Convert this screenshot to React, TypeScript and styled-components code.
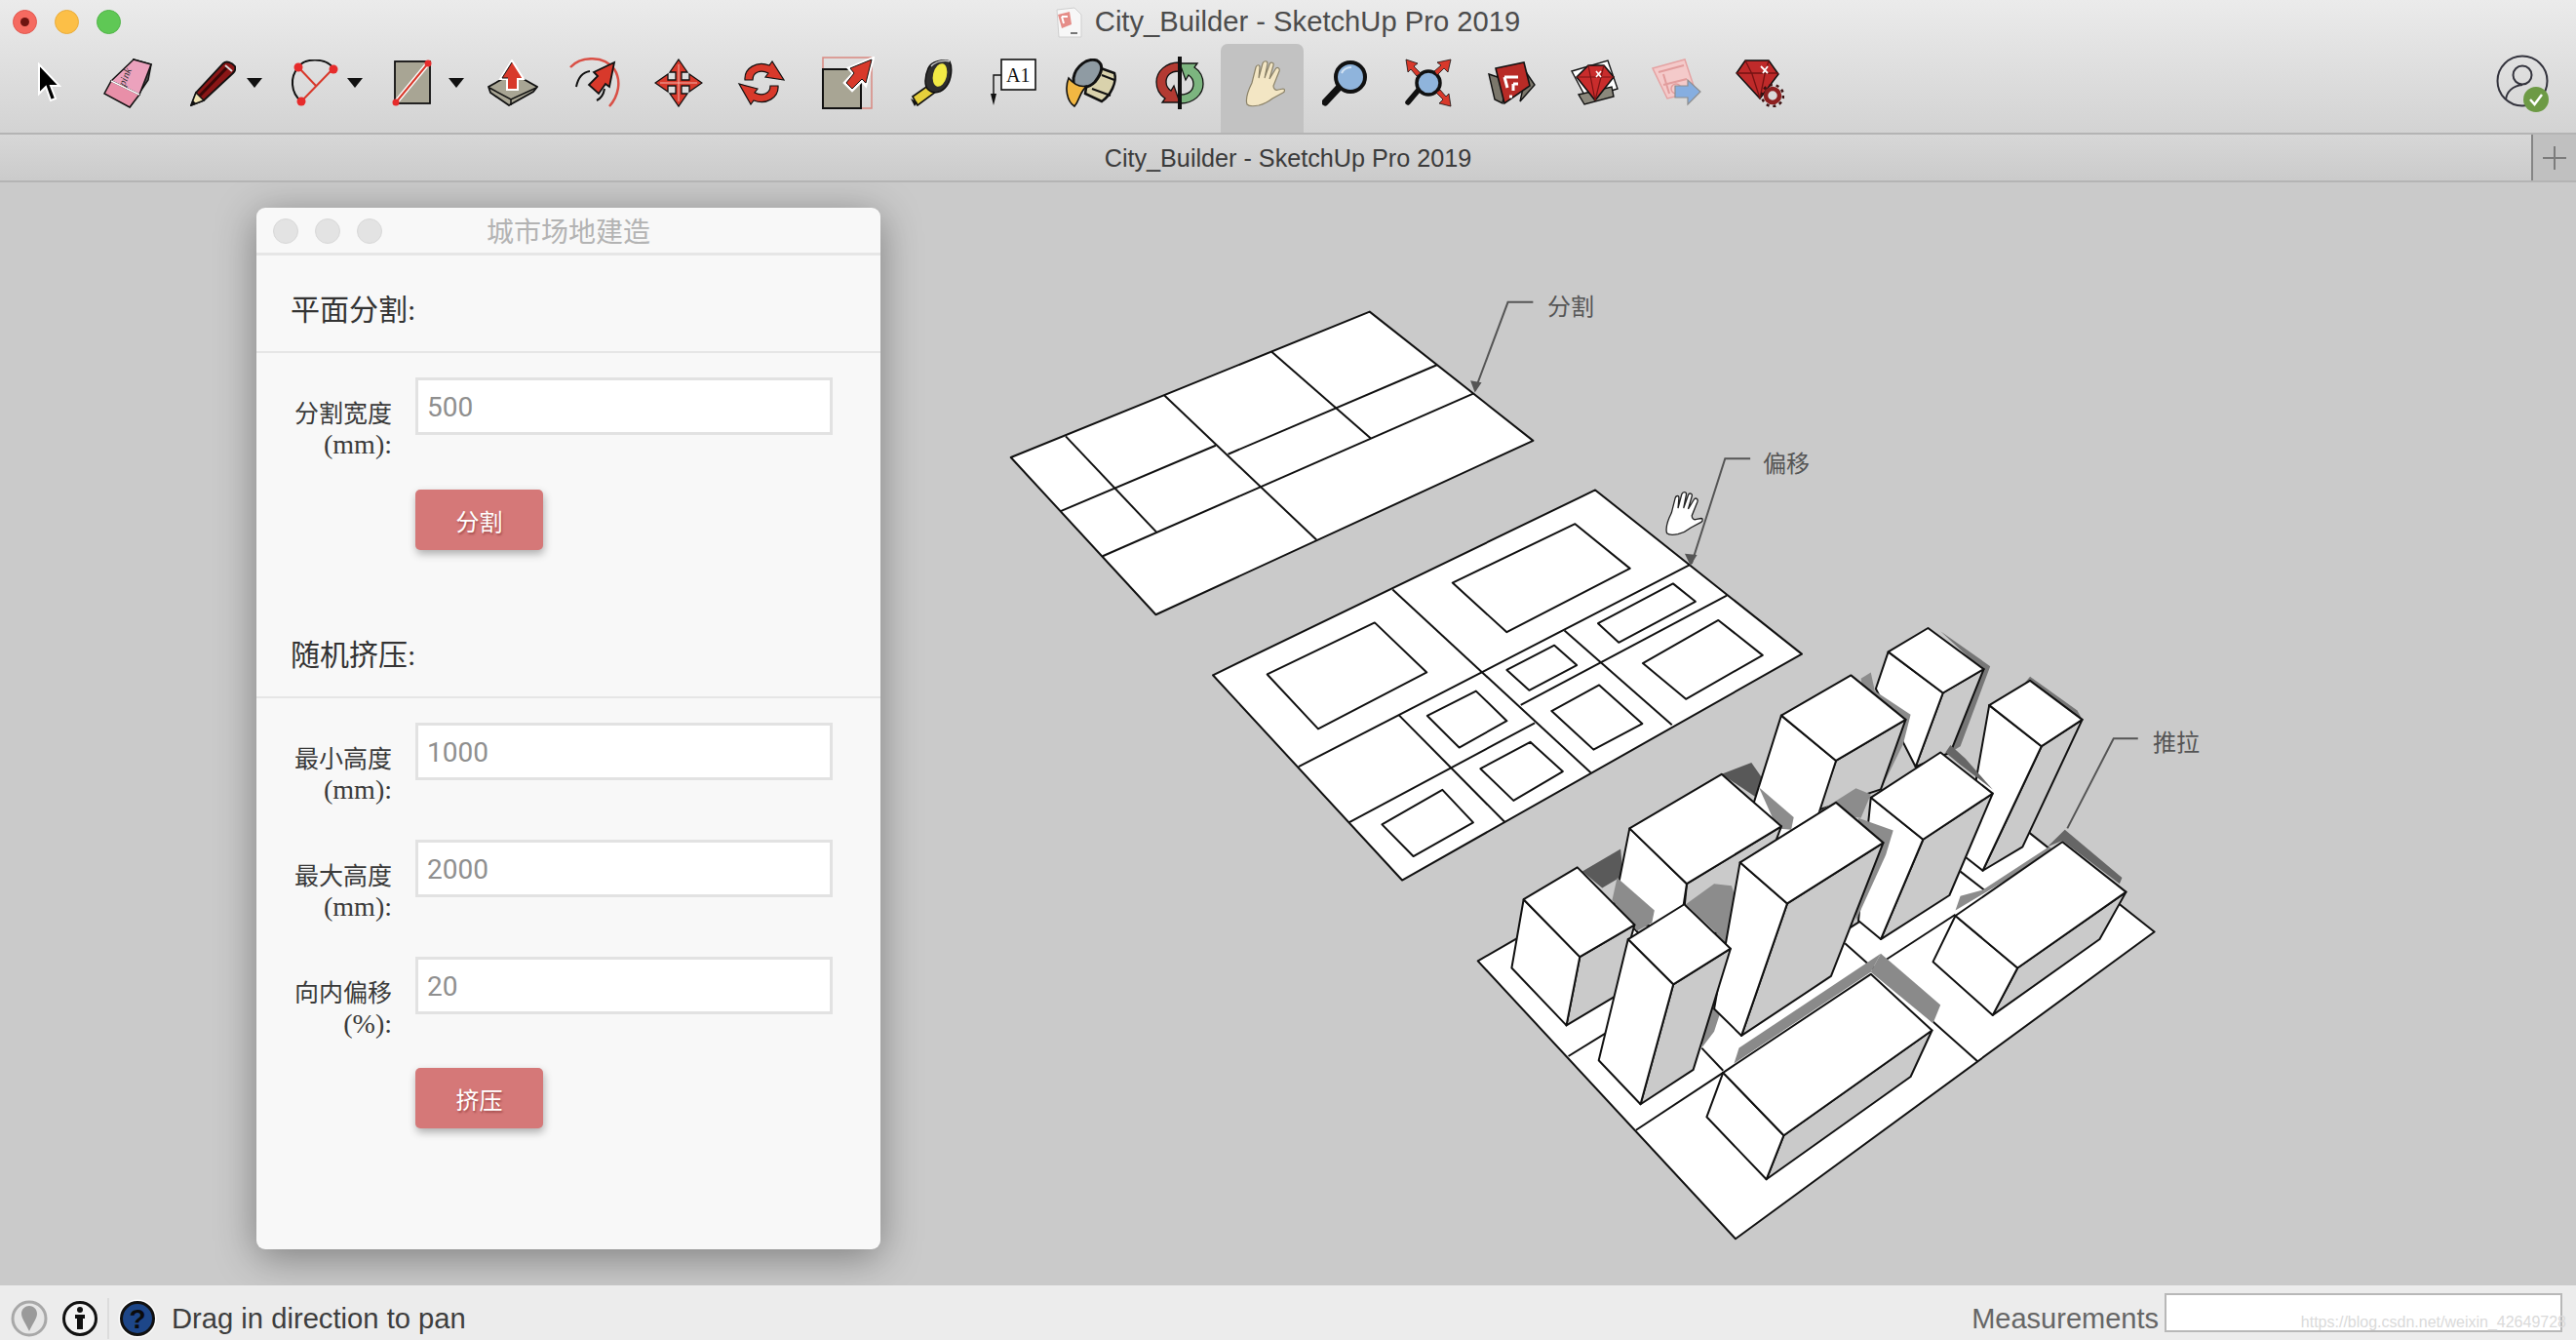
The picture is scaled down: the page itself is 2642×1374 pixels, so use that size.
import React from "react";
import styled, { createGlobalStyle } from "styled-components";

const GlobalStyle = createGlobalStyle`
  html, body {
    margin: 0;
    width: 2642px;
    height: 1374px;
    overflow: hidden;
    background: #cacaca;
  }
  * { box-sizing: border-box; }
`;

const UI_FONT = `"Liberation Sans", "Noto Sans CJK SC", sans-serif`;
const SERIF_FONT = `"Liberation Serif", "Noto Sans CJK SC", serif`;

const Page = styled.div`
  width: 2642px;
  height: 1374px;
  display: flex;
  flex-direction: column;
  font-family: ${UI_FONT};
`;

const TopChrome = styled.div`
  height: 136px;
  flex: none;
  background: linear-gradient(#ebebeb, #d3d3d3);
`;

const TitleRow = styled.div`
  height: 45px;
  display: grid;
  grid-template-columns: 1fr auto 1fr;
  align-items: center;
`;

const Lights = styled.div`
  display: flex;
  gap: 18px;
  margin-left: 13px;
`;

const Light = styled.div<{ $c: string; $b: string }>`
  width: 25px;
  height: 25px;
  border-radius: 50%;
  background: ${(p) => p.$c};
  border: 1px solid ${(p) => p.$b};
  display: flex;
  align-items: center;
  justify-content: center;
`;

const LightDot = styled.div`
  width: 9px;
  height: 9px;
  border-radius: 50%;
  background: #6e1410;
`;

const TitleGroup = styled.div`
  display: flex;
  align-items: center;
  gap: 13px;
`;

const TitleText = styled.div`
  font-size: 29.2px;
  color: #4c4c4c;
  white-space: nowrap;
`;

const Toolbar = styled.div`
  height: 91px;
  display: flex;
  padding: 0 25px 0 11px;
`;

const Slot = styled.div<{ $w: number; $pl?: number; $pr?: number; $active?: boolean }>`
  width: ${(p) => p.$w}px;
  height: 91px;
  flex: none;
  display: flex;
  align-items: center;
  justify-content: ${(p) => (p.$pl !== undefined ? "flex-start" : "center")};
  padding-left: ${(p) => p.$pl ?? 0}px;
  padding-right: ${(p) => p.$pr ?? 0}px;
  padding-bottom: 11px;
  border-radius: 7px 7px 0 0;
  background: ${(p) => (p.$active ? "#c2c2c2" : "transparent")};
`;

const Caret = styled.div<{ $gap: number }>`
  margin-left: ${(p) => p.$gap}px;
  width: 0;
  height: 0;
  border-left: 8px solid transparent;
  border-right: 8px solid transparent;
  border-top: 10px solid #111;
`;

const Account = styled.div`
  margin-left: auto;
  display: flex;
  align-items: center;
  padding-bottom: 11px;
`;

const TabRow = styled.div`
  height: 51px;
  flex: none;
  display: flex;
  background: linear-gradient(#d7d7d7, #cbcbcb);
  border-top: 2px solid #b4b4b4;
  border-bottom: 2px solid #b4b4b4;
`;

const TabLabel = styled.div`
  flex: 1;
  display: flex;
  align-items: center;
  justify-content: center;
  padding: 2px 0 0 46px;
  font-size: 25.2px;
  color: #3b3b3b;
`;

const TabAdd = styled.div`
  width: 46px;
  display: flex;
  align-items: center;
  justify-content: center;
  background: #c0c0c0;
  border-left: 2px solid #858585;
`;

const Canvas = styled.div`
  position: relative;
  flex: 1;
  overflow: hidden;
  background: #cacaca;
`;

const Drawing = styled.svg`
  display: block;
  width: 2642px;
  height: 1131px;
`;

const FloatingWindow = styled.div`
  position: absolute;
  left: 263px;
  top: 26px;
  width: 640px;
  height: 1068px;
  display: flex;
  flex-direction: column;
  background: #f8f8f8;
  border-radius: 9px;
  box-shadow: 0 8px 42px rgba(0, 0, 0, 0.38);
`;

const WindowTitle = styled.div`
  position: relative;
  height: 49px;
  flex: none;
  display: flex;
  align-items: center;
  justify-content: center;
  font-size: 28px;
  color: #b3b3b3;
  border-bottom: 3px solid #e6e6e6;
`;

const WindowLights = styled.div`
  position: absolute;
  left: 17px;
  top: 11px;
  display: flex;
  gap: 17px;
`;

const WindowLight = styled.div`
  width: 26px;
  height: 26px;
  border-radius: 50%;
  background: #e3e3e3;
  border: 1px solid #d8d8d8;
`;

const SectionHead = styled.div`
  height: 100px;
  flex: none;
  display: flex;
  align-items: center;
  padding: 8px 0 0 35px;
  font-family: ${SERIF_FONT};
  font-size: 30px;
  color: #333;
  border-bottom: 2px solid #e6e6e6;
`;

const Form = styled.div`
  display: flex;
  flex-direction: column;
  gap: 35px;
  padding: 25px 0 0 24px;
`;

const Field = styled.div`
  display: flex;
  align-items: flex-start;
  gap: 24px;
  height: 85px;
`;

const FieldLabel = styled.label`
  width: 115px;
  padding-top: 22px;
  text-align: right;
  font-family: ${SERIF_FONT};
  font-size: 25px;
  line-height: 31px;
  color: #3a3a3a;
  white-space: nowrap;
`;

const FieldUnit = styled.span`
  font-size: 28px;
`;

const FieldInput = styled.input`
  width: 428px;
  height: 59px;
  padding: 2px 9px 0;
  background: #fff;
  border: 3px solid #e2e2e2;
  border-radius: 0;
  outline: none;
  font-family: Roboto, sans-serif;
  font-size: 28px;
  &::placeholder {
    color: #8f8f8f;
    opacity: 1;
  }
`;

const ActionButton = styled.button<{ $mt: number }>`
  width: 131px;
  height: 62px;
  margin: ${(p) => p.$mt}px 0 52px 163px;
  flex: none;
  border: none;
  border-radius: 5px;
  background: #d57878;
  color: #fff;
  font-family: ${UI_FONT};
  font-size: 24px;
  text-shadow: 1px 2px 2px rgba(120, 40, 40, 0.5);
  box-shadow: 1px 4px 8px rgba(0, 0, 0, 0.3);
`;

const StatusBar = styled.div`
  height: 56px;
  flex: none;
  display: flex;
  align-items: center;
  padding: 12px 14px 0 11px;
  background: #ececec;
`;

const StatusDivider = styled.div`
  width: 2px;
  height: 42px;
  margin: 0 9px 0 9px;
  background: #dcdcdc;
`;

const StatusText = styled.div`
  margin-left: 15px;
  font-size: 29.2px;
  color: #3e3e3e;
  white-space: nowrap;
`;

const MeasureLabel = styled.div`
  margin-left: auto;
  font-size: 29px;
  color: #666;
`;

const MeasureBox = styled.div`
  position: relative;
  margin: -12px 0 0 6px;
`;

const MeasureInput = styled.input`
  display: block;
  width: 408px;
  height: 40px;
  background: #fff;
  border: 2px solid #b8b8b8;
  outline: none;
`;

const Watermark = styled.div`
  position: absolute;
  right: -4px;
  top: 21px;
  font-size: 16px;
  color: #dadada;
  white-space: nowrap;
`;

const K = "#111";
const RED = "#d8392b";
const KHAKI = "#a8a594";

const handPath =
  "M8 46C6 40 10 30 13 24L17 8C18 5 21 5 21 8L20 19L24 4C25 1 29 1 29 4L26 19L31 5C32 2 36 3 35 6L31 20L37 10C39 7 42 9 41 12L35 27C35 30 37 32 40 31L45 30C47 30 47 33 45 34L34 40C29 44 24 46 20 47C15 48 10 48 8 46Z";

const Icon = ({ w, h, children }: { w: number; h: number; children?: React.ReactNode }) => (
  <svg width={w} height={h} viewBox={`0 0 ${w} ${h}`} style={{ flex: "none", display: "block" }}>
    {children}
  </svg>
);

const tools: { w: number; pl?: number; pr?: number; caret?: number; active?: boolean; icon: React.ReactNode }[] = [
  {
    w: 77,
    icon: (
      <Icon w={26} h={42}>
        <path d="M3 2V32L10 25L15 39L20 37L15 24H24Z" fill="#000" stroke="#fff" strokeWidth="2" />
      </Icon>
    ),
  },
  {
    w: 86,
    icon: (
      <Icon w={50} h={51}>
        <path d="M31 1L49 6L46 22L27 50L37 26Z" fill="#555" stroke={K} strokeWidth="1.5" />
        <path d="M31 1L49 6L37 37L8 23Z" fill="#eca2bd" stroke={K} strokeWidth="1.5" />
        <path d="M8 23L37 37L27 50L1 36Z" fill="#e88fa8" stroke={K} strokeWidth="1.5" />
        <path d="M8 23L37 37" stroke="#fff" strokeWidth="1.5" />
        <text x="22" y="29" fontSize="11" fontFamily="Liberation Serif, serif" fontStyle="italic" fill="#333" transform="rotate(-68 22 29)">
          pink
        </text>
      </Icon>
    ),
  },
  {
    w: 109,
    pl: 21,
    caret: 11,
    icon: (
      <Icon w={47} h={47}>
        <path d="M1 46L6 33L34 3C37 0 43 2 46 6C47 9 46 11 44 13L14 41Z" fill="#8a1616" stroke={K} strokeWidth="1.8" />
        <path d="M10 36L38 7" stroke="#3b0808" strokeWidth="3" />
        <path d="M6 33L14 41L1 46Z" fill="#efe3b3" stroke={K} strokeWidth="1.4" />
        <path d="M1 46L3 41L6 44Z" fill={K} />
        <path d="M36 5L43 11" stroke="#ddd" strokeWidth="2" />
      </Icon>
    ),
  },
  {
    w: 102,
    pl: 15,
    caret: 9,
    icon: (
      <Icon w={49} h={48}>
        <path d="M8 8C14 -2 36 -2 44 9" fill="none" stroke={K} strokeWidth="2" />
        <path d="M8 8C-1 18 0 34 11 43" fill="none" stroke={K} strokeWidth="2" />
        <path d="M8 8L27 28M44 9L11 43" stroke={RED} strokeWidth="2" />
        <circle cx="8" cy="8" r="4.5" fill="#e62b2b" />
        <circle cx="44" cy="10" r="4.5" fill="#e62b2b" />
        <circle cx="11" cy="43" r="4.5" fill="#e62b2b" />
      </Icon>
    ),
  },
  {
    w: 102,
    pl: 17,
    caret: 15,
    icon: (
      <Icon w={43} h={48}>
        <rect x="3" y="2" width="36" height="43" fill={KHAKI} stroke={K} strokeWidth="1.8" />
        <path d="M4 44L37 4" stroke="#fff" strokeWidth="5" />
        <path d="M4 44L37 4" stroke={RED} strokeWidth="2" />
        <circle cx="37" cy="4" r="3.5" fill="#e62b2b" />
        <circle cx="4" cy="44" r="3.5" fill="#e62b2b" />
      </Icon>
    ),
  },
  {
    w: 85,
    pr: 7,
    icon: (
      <Icon w={52} h={48}>
        <path d="M1 28L26 14L51 28L47 33L22 47L3 34Z" fill={KHAKI} stroke={K} strokeWidth="1.8" />
        <path d="M2 29L24 41L50 29M24 41V47" fill="none" stroke={K} strokeWidth="1.5" />
        <path d="M25 1L13 20H20V31H31V20H37Z" fill={RED} stroke="#fff" strokeWidth="2" />
        <path d="M25 3L15 19H21" fill="none" stroke={K} strokeWidth="1" />
      </Icon>
    ),
  },
  {
    w: 85,
    pr: 7,
    icon: (
      <Icon w={54} h={52}>
        <path d="M1 10C12 -2 36 -2 46 12C54 24 50 40 41 50" fill="none" stroke="#d94f45" strokeWidth="2.5" />
        <path d="M7 30C9 20 14 15 21 14" fill="none" stroke={K} strokeWidth="2" />
        <path d="M28 44C32 42 35 38 36 32" fill="none" stroke={K} strokeWidth="2" />
        <path d="M46 5L25 15L29 19L20 28L30 37L37 27L41 30Z" fill={RED} stroke={K} strokeWidth="1.8" />
      </Icon>
    ),
  },
  {
    w: 85,
    pr: 7,
    icon: (
      <Icon w={50} h={50}>
        <path
          d="M25 1L34 14H28V22H36V16L49 25L36 34V28H28V36H34L25 49L16 36H22V28H14V34L1 25L14 16V22H22V14H16Z"
          fill={RED}
          stroke={K}
          strokeWidth="1.3"
        />
        <path d="M25 6V44M6 25H44" stroke="#f4b4ac" strokeWidth="1" />
      </Icon>
    ),
  },
  {
    w: 85,
    pr: 7,
    icon: (
      <Icon w={50} h={46}>
        <path d="M8 20C7 8 20 0 33 5L36 1L48 20L29 17L32 13C24 9 16 12 16 20Z" fill={RED} stroke={K} strokeWidth="1.2" />
        <path d="M42 26C43 38 30 46 17 41L14 45L2 24L21 29L18 33C26 37 34 34 34 26Z" fill={RED} stroke={K} strokeWidth="1.2" />
      </Icon>
    ),
  },
  {
    w: 85,
    icon: (
      <Icon w={54} h={54}>
        <rect x="1" y="1" width="50" height="52" fill="none" stroke="#d98880" strokeWidth="1.5" />
        <rect x="1" y="13" width="39" height="40" fill={KHAKI} stroke={K} strokeWidth="2" />
        <path d="M53 1L27 12L32 17L23 27L31 35L41 25L45 30Z" fill={RED} stroke="#fff" strokeWidth="2.5" />
        <path d="M51 3L29 12L33 17L25 27L31 33L41 23L45 27Z" fill={RED} stroke={K} strokeWidth="1" />
      </Icon>
    ),
  },
  {
    w: 85,
    icon: (
      <Icon w={44} h={48}>
        <path d="M3 38L20 26L27 33L8 47Z" fill="#e6cf3c" stroke={K} strokeWidth="1.6" />
        <path d="M1 40L5 48L8 44Z" fill={K} />
        <path d="M19 9C22 2 35 -1 41 2C44 8 43 20 38 27C33 34 24 36 19 31C15 27 15 18 19 9Z" fill="#2e2e2e" stroke={K} strokeWidth="1.5" />
        <ellipse cx="31" cy="16" rx="7" ry="12" transform="rotate(14 31 16)" fill="#f2ea45" />
        <path d="M22 7C26 2 36 0 41 2" stroke="#ccc" strokeWidth="1.5" fill="none" />
      </Icon>
    ),
  },
  {
    w: 85,
    icon: (
      <Icon w={48} h={50}>
        <rect x="11" y="1" width="35" height="31" fill="#fff" stroke={K} strokeWidth="1.6" />
        <text x="16" y="24" fontSize="20" fontFamily="Liberation Serif, serif" fill="#111">
          A1
        </text>
        <path d="M11 17H3V44" fill="none" stroke={K} strokeWidth="1.4" />
        <path d="M0 36H6L3 48Z" fill={K} />
      </Icon>
    ),
  },
  {
    w: 85,
    pr: 10,
    icon: (
      <Icon w={54} h={50}>
        <path d="M25 6L50 15C53 24 46 38 37 44L20 36Z" fill="#d9d2ac" stroke={K} strokeWidth="2.5" />
        <path d="M37 17L50 22M27 31L46 38" stroke={K} strokeWidth="2" />
        <path d="M8 20C10 8 22 -1 32 2C39 6 38 14 30 24C24 30 14 32 8 28Z" fill="#8f9ba3" stroke={K} strokeWidth="3" />
        <path d="M3 20C-1 30 1 44 9 49C15 42 14 34 22 28C14 30 8 26 3 20Z" fill="#f2b742" stroke={K} strokeWidth="1.6" />
      </Icon>
    ),
  },
  {
    w: 85,
    icon: (
      <Icon w={50} h={54}>
        <path
          d="M24 6V15C15 15 11 20 11 26C11 30 13 33 16 35L19 30L25 47H7L10 43C4 39 1 33 1 26C1 15 11 6 24 6Z"
          fill="#b33a32"
          stroke={K}
          strokeWidth="1.3"
        />
        <path
          d="M24 6V15C15 15 11 20 11 26C11 30 13 33 16 35L19 30L25 47H7L10 43C4 39 1 33 1 26C1 15 11 6 24 6Z"
          fill="#7cb57f"
          stroke={K}
          strokeWidth="1.3"
          transform="rotate(180 25 27)"
        />
        <rect x="23" y="0" width="4" height="54" fill={K} />
      </Icon>
    ),
  },
  {
    w: 85,
    active: true,
    icon: (
      <Icon w={48} h={49}>
        <path d={handPath} fill="#f3e6c4" stroke="#8b8268" strokeWidth="1.2" />
      </Icon>
    ),
  },
  {
    w: 85,
    icon: (
      <Icon w={47} h={48}>
        <path d="M17 29L3 44" stroke={K} strokeWidth="7" strokeLinecap="round" />
        <circle cx="29" cy="18" r="15" fill="#8fb4dc" stroke={K} strokeWidth="4" />
        <path d="M20 14C22 10 26 8 30 8" stroke="#d3e3f3" strokeWidth="2" fill="none" />
      </Icon>
    ),
  },
  {
    w: 85,
    icon: (
      <Icon w={50} h={50}>
        <path d="M15 32L4 45" stroke={K} strokeWidth="5.5" strokeLinecap="round" />
        <circle cx="25" cy="25" r="12" fill="#8fb4dc" stroke={K} strokeWidth="3.5" />
        <path d="M2 1L14 5L10 8L17 15L13 18L7 11L4 14Z" fill={RED} stroke={K} strokeWidth="0.8" />
        <path d="M48 1L45 14L41 10L34 17L31 13L38 7L34 4Z" fill={RED} stroke={K} strokeWidth="0.8" />
        <path d="M48 49L36 46L40 42L33 35L37 32L43 39L46 36Z" fill={RED} stroke={K} strokeWidth="0.8" />
      </Icon>
    ),
  },
  {
    w: 85,
    icon: (
      <Icon w={50} h={46}>
        <path d="M2 14L20 20L16 44L8 40Z" fill="#7b776b" stroke={K} strokeWidth="1.4" />
        <path d="M36 6L49 25L34 42L38 24Z" fill="#7b776b" stroke={K} strokeWidth="1.4" />
        <path d="M9 8L38 2L44 26L18 44Z" fill="#b82b26" stroke={K} strokeWidth="1.6" />
        <path d="M18 17H32M18 17L21 28M27 24H32M27 24V31M23 37H26" stroke="#fff" strokeWidth="3" fill="none" />
      </Icon>
    ),
  },
  {
    w: 85,
    icon: (
      <Icon w={52} h={48}>
        <path d="M3 12L40 1L50 30L18 40Z" fill="#fff" stroke={K} strokeWidth="1.4" />
        <path d="M10 36L44 28L46 38L16 46Z" fill="#8b887c" stroke={K} strokeWidth="1.4" />
        <path d="M8 18L20 6H36L46 18L27 42Z" fill="#c92c2c" stroke={K} strokeWidth="1.6" />
        <path d="M8 18H46M20 6L27 42M36 6L27 42" stroke="#7a1414" strokeWidth="1.2" />
        <path d="M28 12L33 18M33 12L28 18" stroke="#fff" strokeWidth="1.6" />
      </Icon>
    ),
  },
  {
    w: 85,
    icon: (
      <Icon w={52} h={50}>
        <path d="M1 10L34 1L45 34L16 41Z" fill="#f4caca" stroke="#e5a3a3" strokeWidth="1.5" />
        <path d="M7 14L33 7M12 27L36 21M12 16L18 36" stroke="#e29d9d" strokeWidth="2" />
        <circle cx="25" cy="31" r="5" fill="none" stroke="#e29d9d" strokeWidth="1.5" />
        <path d="M24 28H37V22L50 34L37 47V40H24Z" fill="#86aee0" stroke="#8e8e8e" strokeWidth="1.2" />
      </Icon>
    ),
  },
  {
    w: 85,
    icon: (
      <Icon w={50} h={50}>
        <path d="M10 2H34L44 16L25 41L1 15Z" fill="#bf2a2a" stroke={K} strokeWidth="1.5" />
        <path d="M1 15H44M10 2L17 16L25 41M34 2L30 16L25 41" stroke="#741212" strokeWidth="1.3" fill="none" />
        <path d="M26 8L33 15M33 8L28 15" stroke="#fff" strokeWidth="1.8" />
        <circle cx="38" cy="38" r="7" fill="none" stroke="#8e2020" strokeWidth="4.5" />
        <circle cx="38" cy="38" r="11" fill="none" stroke="#3a1010" strokeWidth="2.5" strokeDasharray="3 3.9" />
      </Icon>
    ),
  },
];

// points read off the reference, each group has its own scale
const planeOneLines = [
  "530,198 707,415",
  "825,231 452,455",
  "890,303 228,711",
  "338,307 610,670",
  "162,410 325,652",
  "430,433 153,598",
];

const planeTwoLines = [
  "1277,733 578,1240",
  "1343,810 975,1085",
  "1000,1130 668,1380",
  "746,795 1100,1255",
  "757,1110 947,1380",
  "1053,898 1245,1135",
];

const planeTwoInsets = [
  "1072,630 1170,742 950,902 853,778",
  "714,878 807,1003 613,1145 522,1008",
  "1247,780 1287,825 1150,928 1113,880",
  "1328,872 1407,960 1270,1070 1193,980",
  "1035,935 1075,985 990,1048 950,997",
  "1115,1035 1192,1132 1105,1197 1030,1100",
  "895,1050 950,1125 865,1192 808,1112",
  "992,1178 1050,1252 962,1325 903,1245",
  "835,1298 890,1380 783,1465 727,1385",
];

const groundLines = [
  "252,1100 335,1038",
  "388,1280 563,1140",
  "520,1080 563,1135",
  "808,825 1075,1113",
  "865,885 1030,755",
  "1040,650 1090,697",
];

// shadows lying on the ground, under every block
const groundShadows: [string, string][] = [
  ["280,650 357,595 362,660 320,690", "#5a5a5a"],
  ["560,413 620,385 640,420 630,470", "#585858"],
  ["1000,65 1100,150 1040,345 1020,360 1085,160", "#777"],
  ["1180,175 1275,258 1285,280 1170,190", "#777"],
  ["1215,590 1250,548 1365,665 1360,680 1245,575", "#666"],
  ["1030,745 1040,710 1085,695 1218,590 1230,600", "#8c8c8c"],
  ["860,895 880,850 1000,975 985,1020", "#8a8a8a"],
  ["585,1118 595,1080 880,850 860,895", "#8a8a8a"],
];

type Block = { top: string; left: string; right: string; shade?: [string, string][] };

const blocks: Block[] = [
  {
    top: "975,57 1087,157 1005,215 895,115",
    left: "895,115 1005,215 950,395 870,205",
    right: "1005,215 1087,157 1020,360 950,395",
    shade: [["840,180 860,165 868,210 940,268 925,340 880,450", "#8c8c8c"]],
  },
  {
    top: "1180,185 1285,280 1203,345 1098,245",
    left: "1098,245 1203,345 1085,648 1045,610",
    right: "1203,345 1285,280 1165,590 1085,648",
    shade: [["1010,360 1020,342 1050,375 1105,450 1040,390", "#666"]],
  },
  {
    top: "820,172 930,280 790,380 680,270",
    left: "680,270 790,380 720,640 615,520",
    right: "790,380 930,280 880,450 755,500",
    shade: [
      ["635,445 705,518 700,548 672,545", "#8c8c8c"],
      ["755,505 830,447 860,462 840,520", "#8c8c8c"],
    ],
  },
  {
    top: "560,413 680,540 490,680 375,545",
    left: "375,545 490,680 475,800 340,760",
    right: "490,680 680,540 600,800 480,800",
    shade: [
      ["350,665 425,745 420,775 390,795 340,720", "#8c8c8c"],
      ["488,730 545,680 580,685 610,798 545,1040 520,1080 550,800", "#8c8c8c"],
    ],
  },
  {
    top: "1000,360 1105,460 965,572 860,470",
    left: "860,470 965,572 880,815 835,770",
    right: "965,572 1105,460 1018,708 880,815",
    shade: [["835,520 905,550 890,610 830,770", "#8c8c8c"]],
  },
  {
    top: "790,482 885,580 692,728 597,628",
    left: "597,628 692,728 600,1050 545,985",
    right: "692,728 885,580 780,905 600,1050",
  },
  {
    top: "270,640 385,780 275,858 162,718",
    left: "162,718 275,858 248,1025 138,885",
    right: "275,858 385,780 345,955 248,1025",
  },
  {
    top: "485,730 578,838 463,925 372,815",
    left: "372,815 463,925 397,1217 313,1110",
    right: "463,925 578,838 503,1133 397,1217",
  },
  {
    top: "1245,578 1373,700 1155,885 1030,758",
    left: "1030,758 1155,885 1105,1000 985,870",
    right: "1155,885 1373,700 1320,815 1105,1000",
  },
  {
    top: "860,900 983,1037 685,1293 563,1140",
    left: "563,1140 685,1293 650,1400 530,1248",
    right: "685,1293 983,1037 940,1150 650,1400",
  },
];

const Edge = ({ points, fill = "#fff" }: { points: string; fill?: string }) => (
  <polygon points={points} fill={fill} stroke="#111" strokeWidth="2" strokeLinejoin="round" vectorEffect="non-scaling-stroke" />
);

const Seg = ({ points }: { points: string }) => (
  <polyline points={points} fill="none" stroke="#111" strokeWidth="2" vectorEffect="non-scaling-stroke" />
);

const Leader = ({ points, tip }: { points: string; tip?: string }) => (
  <>
    <polyline points={points} fill="none" stroke="#555" strokeWidth="2" vectorEffect="non-scaling-stroke" />
    {tip && <polygon points={tip} fill="#555" />}
  </>
);

const Callout = styled.text`
  font-family: "Noto Sans CJK SC", sans-serif;
  font-size: 24px;
  fill: #555;
`;

const sections = [
  {
    title: "平面分割:",
    fields: [{ label: "分割宽度", unit: "(mm):", value: "500" }],
    action: "分割",
    mt: 30,
  },
  {
    title: "随机挤压:",
    fields: [
      { label: "最小高度", unit: "(mm):", value: "1000" },
      { label: "最大高度", unit: "(mm):", value: "2000" },
      { label: "向内偏移", unit: "(%):", value: "20" },
    ],
    action: "挤压",
    mt: 29,
  },
];

export default function App() {
  return (
    <Page>
      <GlobalStyle />
      <TopChrome>
        <TitleRow>
          <Lights>
            <Light $c="#f56a60" $b="#e2584f">
              <LightDot />
            </Light>
            <Light $c="#fcbf47" $b="#e9ad3d" />
            <Light $c="#5fc855" $b="#50b448" />
          </Lights>
          <TitleGroup>
            <Icon w={27} h={32}>
              <path d="M1 3L19 1L26 8V31H3Z" fill="#f7f7f7" stroke="#cfcfcf" />
              <path d="M2 8L14 5L16 18L6 22Z" fill="#e58d88" />
              <path d="M6 10H12M6 10L8 17" stroke="#fff" strokeWidth="2" />
              <path d="M15 27H22" stroke="#777" strokeWidth="2" />
            </Icon>
            <TitleText>City_Builder - SketchUp Pro 2019</TitleText>
          </TitleGroup>
        </TitleRow>
        <Toolbar>
          {tools.map((t, i) => (
            <Slot key={i} $w={t.w} $pl={t.pl} $pr={t.pr} $active={t.active}>
              {t.icon}
              {t.caret !== undefined && <Caret $gap={t.caret} />}
            </Slot>
          ))}
          <Account>
            <Icon w={60} h={60}>
              <circle cx="30" cy="28" r="25.5" fill="none" stroke="#33333d" strokeWidth="2" />
              <circle cx="30" cy="22" r="9.5" fill="none" stroke="#33333d" strokeWidth="2" />
              <path d="M13 47C14 39 20 33 30 32" fill="none" stroke="#33333d" strokeWidth="2" />
              <circle cx="44" cy="47" r="13" fill="#6d9a45" />
              <path d="M38 47L42.5 52L50 42" fill="none" stroke="#fff" strokeWidth="2.5" />
            </Icon>
          </Account>
        </Toolbar>
      </TopChrome>
      <TabRow>
        <TabLabel>City_Builder - SketchUp Pro 2019</TabLabel>
        <TabAdd>
          <Icon w={24} h={24}>
            <path d="M12 0V24M0 12H24" stroke="#7c7c7c" strokeWidth="2" />
          </Icon>
        </TabAdd>
      </TabRow>
      <Canvas>
        <Drawing viewBox="0 187 2642 1131">
          <g transform="translate(1000 280) scale(0.5741 0.4082)">
            <Edge points="705,97 997,421 323,858 64,463" />
            {planeOneLines.map((p) => (
              <Seg key={p} points={p} />
            ))}
            <Edge points="1108,545 1477,957 763,1525 425,1010" />
            {planeTwoLines.map((p) => (
              <Seg key={p} points={p} />
            ))}
            {planeTwoInsets.map((p) => (
              <Edge key={p} points={p} />
            ))}
            <Leader points="997,73 952,73 893,295" tip="893,300 885,270 905,275" />
            <Leader points="1385,466 1340,466 1280,730" tip="1278,735 1268,705 1290,708" />
          </g>
          <g transform="translate(1702 503)">
            <path d={handPath} transform="scale(0.95)" fill="#fff" stroke="#222" strokeWidth="1.4" />
          </g>
          <Callout x="1587" y="323">
            分割
          </Callout>
          <Callout x="1808" y="484">
            偏移
          </Callout>
          <Callout x="2208" y="770">
            推拉
          </Callout>
          <g transform="translate(1480 620) scale(0.5102 0.4209)">
            <Leader points="1397,326 1348,326 1255,545" />
            <Edge points="70,868 588,1545 1430,797 1178,555 1040,620 840,770 545,1000 385,790 160,805" />
            {groundLines.map((p) => (
              <Seg key={p} points={p} />
            ))}
            {groundShadows.map(([p, c]) => (
              <polygon key={p} points={p} fill={c} />
            ))}
            {blocks.map((b) => (
              <g key={b.top}>
                <Edge points={b.right} fill="#cacaca" />
                <Edge points={b.left} />
                <Edge points={b.top} />
                {b.shade?.map(([p, c]) => (
                  <polygon key={p} points={p} fill={c} />
                ))}
              </g>
            ))}
          </g>
        </Drawing>
        <FloatingWindow>
          <WindowTitle>
            <WindowLights>
              <WindowLight />
              <WindowLight />
              <WindowLight />
            </WindowLights>
            城市场地建造
          </WindowTitle>
          {sections.map((s) => (
            <React.Fragment key={s.title}>
              <SectionHead>{s.title}</SectionHead>
              <Form>
                {s.fields.map((f) => (
                  <Field key={f.value}>
                    <FieldLabel>
                      {f.label}
                      <br />
                      <FieldUnit>{f.unit}</FieldUnit>
                    </FieldLabel>
                    <FieldInput placeholder={f.value} />
                  </Field>
                ))}
              </Form>
              <ActionButton $mt={s.mt}>{s.action}</ActionButton>
            </React.Fragment>
          ))}
        </FloatingWindow>
      </Canvas>
      <StatusBar>
        <Icon w={38} h={38}>
          <circle cx="19" cy="19" r="17" fill="#e6e6e6" stroke="#a8a8a8" strokeWidth="3" />
          <path d="M19 32C16 25 11 19 11 14C11 9 15 6 19 6C23 6 27 9 27 14C27 19 22 25 19 32Z" fill="#9a9a9a" />
        </Icon>
        <Icon w={14} h={38} />
        <Icon w={38} h={38}>
          <circle cx="19" cy="19" r="16.5" fill="#f4f4f4" stroke="#111" strokeWidth="3" />
          <circle cx="19" cy="10" r="3" fill="#111" />
          <path d="M14 15H24V19H22V30H16V19H14Z" fill="#111" />
        </Icon>
        <StatusDivider />
        <Icon w={40} h={40}>
          <circle cx="20" cy="20" r="19.5" fill="#fff" />
          <circle cx="20" cy="20" r="16.5" fill="#1d4688" stroke="#111" strokeWidth="3" />
          <text x="20" y="30" textAnchor="middle" fontFamily="Liberation Sans, sans-serif" fontWeight="700" fontSize="28" fill="#0b0b0b">
            ?
          </text>
        </Icon>
        <StatusText>Drag in direction to pan</StatusText>
        <MeasureLabel>Measurements</MeasureLabel>
        <MeasureBox>
          <MeasureInput />
          <Watermark>https://blog.csdn.net/weixin_42649728</Watermark>
        </MeasureBox>
      </StatusBar>
    </Page>
  );
}
